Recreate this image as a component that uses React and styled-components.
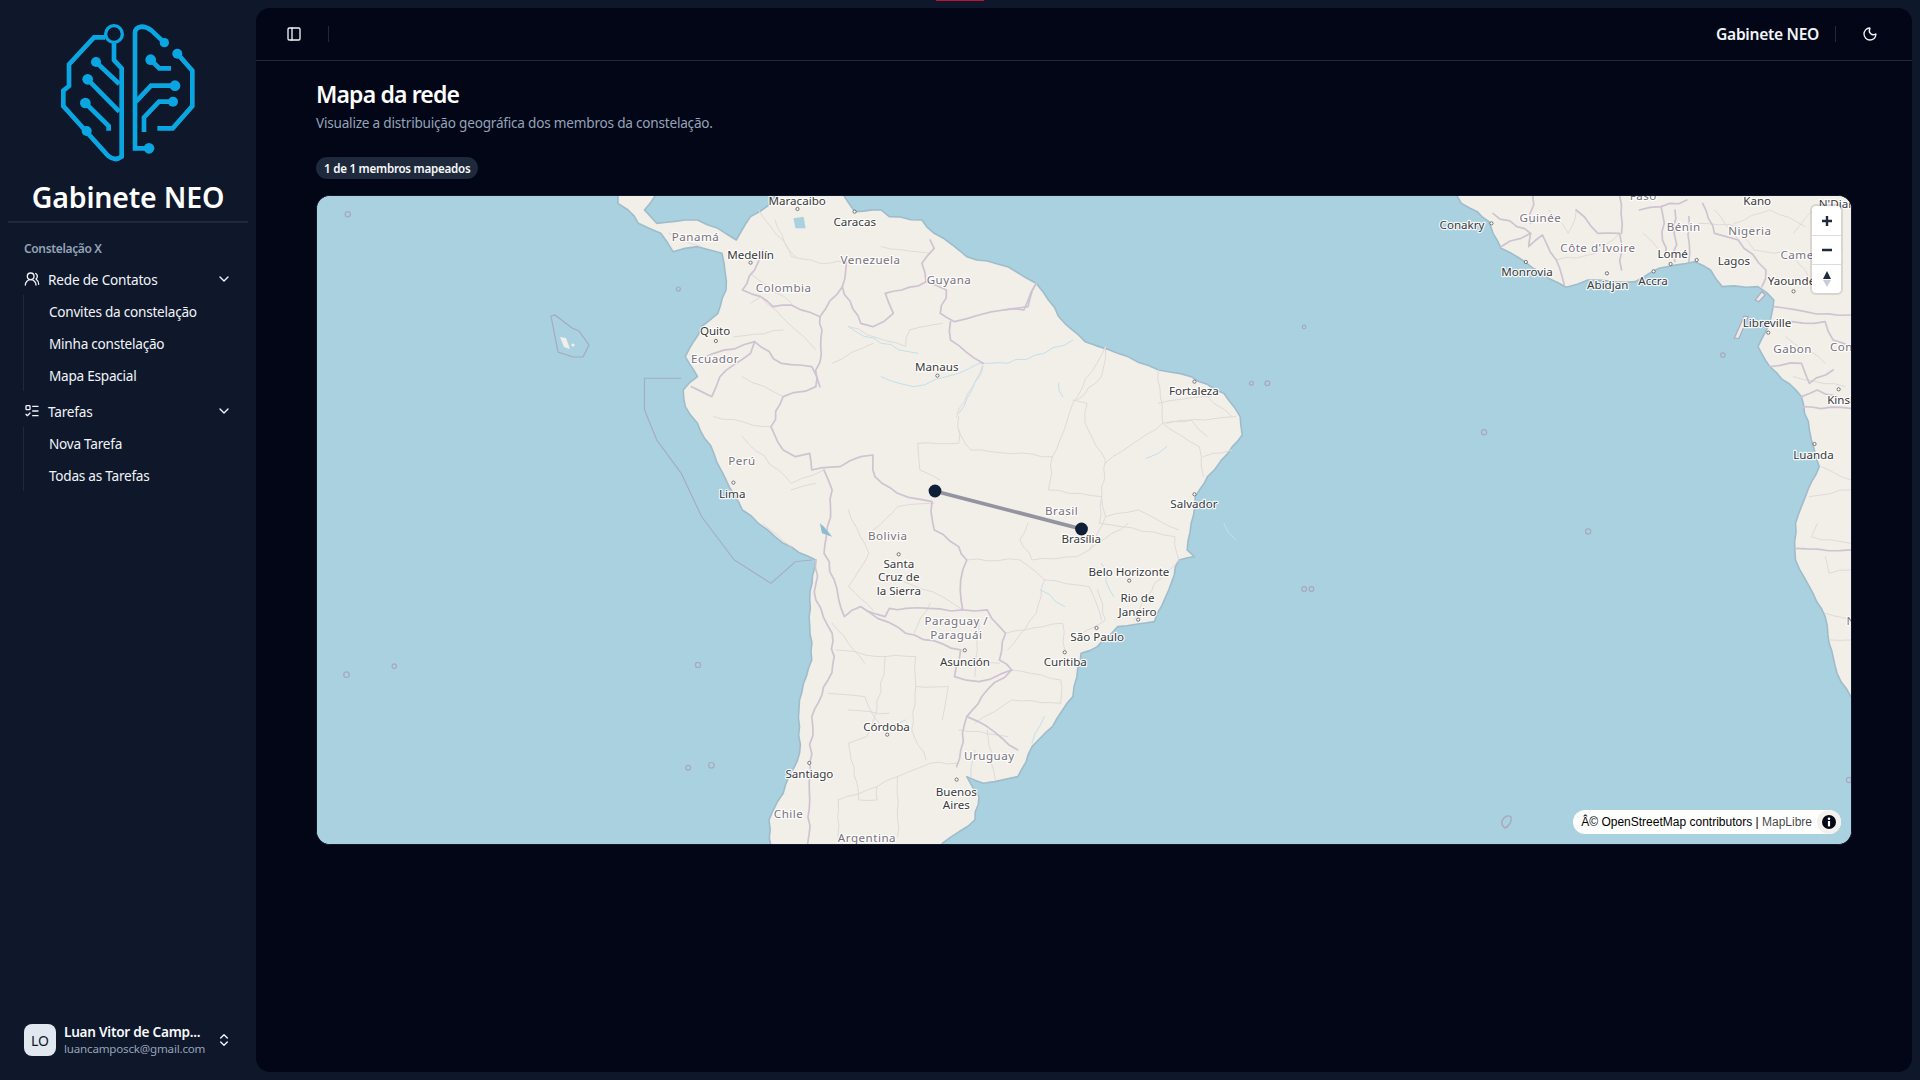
import React from "react";
import styled, { createGlobalStyle } from "styled-components";
import { ChevronDown, ChevronsUpDown, ListTodo, Moon, PanelLeft, UsersRound } from "lucide-react";

const SCALE = 1.2245;

// roughens a hand traced "M..L.." line so that it reads as a border or a coast
const wobble = (d, amp, seed = 7) => {
    let s = seed;
    const rand = () => {
        s = (s * 9301 + 49297) % 233280;
        return s / 233280 - 0.5;
    };
    const closed = d.endsWith("Z");
    const nums = d.match(/-?\d+(\.\d+)?/g).map(Number);
    let out = `M${nums[0]} ${nums[1]}`;
    for (let i = 2; i < nums.length; i += 2) {
        const [x0, y0, x1, y1] = [nums[i - 2], nums[i - 1], nums[i], nums[i + 1]];
        const len = Math.hypot(x1 - x0, y1 - y0);
        const n = Math.max(1, Math.round(len / 26));
        for (let k = 1; k <= n; k++) {
            const t = k / n;
            const off = k < n ? amp * rand() * 2 : 0;
            const px = x0 + (x1 - x0) * t - ((y1 - y0) / len) * off;
            const py = y0 + (y1 - y0) * t + ((x1 - x0) / len) * off;
            out += `L${px.toFixed(1)} ${py.toFixed(1)}`;
        }
    }
    return closed ? `${out}Z` : out;
};

// all labels in coordinates of the map as first sketched, multiplied by SCALE when drawn
const CITIES = [
    ["Maracaibo", 651, 164], ["Caracas", 698, 181], ["Medellín", 613, 208], ["Quito", 584, 270],
    ["Manaus", 765, 299], ["Fortaleza", 975, 319], ["Lima", 598, 403], ["Brasília", 883, 440],
    ["Salvador", 975, 411], ["Santa", 734, 460], ["Cruz de", 734, 471], ["la Sierra", 734, 482],
    ["Belo Horizonte", 922, 467], ["Rio de", 929, 488], ["Janeiro", 929, 499], ["São Paulo", 896, 520],
    ["Asunción", 788, 540], ["Curitiba", 870, 540], ["Córdoba", 724, 593], ["Santiago", 661, 632],
    ["Buenos", 781, 646], ["Aires", 781, 657], ["Conakry", 1194, 183], ["Lomé", 1366, 207],
    ["Lagos", 1416, 213], ["Monrovia", 1247, 222], ["Abidjan", 1313, 232], ["Accra", 1350, 229],
    ["Yaoundé", 1463, 229], ["Kano", 1435, 164], ["N'Djamena", 1510, 166], ["Libreville", 1443, 263],
    ["Kinshasa", 1512, 326], ["Luanda", 1481, 371],
];

const COUNTRIES = [
    ["Panamá", 568, 193], ["Venezuela", 711, 212], ["Colombia", 640, 235], ["Guyana", 775, 228],
    ["Ecuador", 584, 293], ["Perú", 606, 376], ["Bolivia", 725, 437], ["Brasil", 867, 417],
    ["Paraguay /", 781, 507], ["Paraguái", 781, 518], ["Uruguay", 808, 617], ["Chile", 644, 664],
    ["Argentina", 708, 684], ["Guinée", 1258, 178], ["Bénin", 1375, 185], ["Nigeria", 1429, 188],
    ["Côte d'Ivoire", 1305, 202], ["Faso", 1342, 160], ["Gabon", 1464, 285], ["Congo", 1510, 283],
    ["Cameroun", 1479, 208], ["Namibia", 1528, 507],
];

const ISLANDS = [
    [284, 175, 2.6], [554, 236, 2], [283, 551, 2.8], [322, 544, 2.2], [570, 543, 2.6], [562, 627, 2.4],
    [581, 625, 2.8], [1065, 267, 1.8], [1022, 313, 2], [1035, 313, 2.4], [1212, 353, 2.6], [1297, 434, 2.6],
    [1065, 481, 2.4], [1071, 481, 2.4], [1407, 290, 2.2], [1510, 637, 2.6],
];

const SA_DOTS = [
    [575, 65], [435, 57], [320, 218], [235, 453], [778, 557], [1408, 575], [278, 878], [1408, 913],
    [683, 1093], [1248, 1172], [1270, 1289], [1168, 1314], [845, 1381], [1090, 1387], [655, 1634],
    [464, 1719], [825, 1769],
];

const AF_DOTS = [[636, 100], [723, 216], [928, 250], [1046, 244], [1089, 222], [1155, 210], [1400, 304], [1336, 428], [1514, 598], [1453, 762]];

const SA_COAST = wobble("M-5 10L90 10L60 60L90 100L130 95L190 90L240 115L285 150L320 80L365 45L385 10L545 10L575 65L640 60L660 80L740 90L770 130L815 165L850 200L950 230L1020 280L1050 330L1090 400L1140 455L1220 490L1320 540L1400 560L1480 610L1520 680L1525 735L1490 790L1440 860L1410 920L1400 1000L1390 1080L1408 1100L1370 1110L1345 1200L1310 1295L1220 1310L1170 1370L1130 1390L1120 1460L1110 1520L1060 1610L1010 1670L975 1760L890 1780L850 1760L880 1820L870 1890L790 1960L780 2000L370 2000L365 1890L400 1810L440 1690L440 1530L470 1410L465 1230L480 1110L400 1060L300 960L260 870L230 790L190 700L160 650L155 600L190 560L160 500L200 410L240 370L260 300L255 220L250 190L190 170L130 185L100 130L45 100L20 60L-5 40Z", 3);

const SA_BORDERS = [
    "M555 215L545 290L590 400L620 410L670 370L650 310L690 300L750 275L740 220L770 175L760 150",
    "M750 275L800 300L785 370L820 395L880 375L940 360L1000 350L1020 280",
    "M545 290L490 380L495 420L480 590L400 620L370 710L400 780L430 800L465 790L470 840L540 830L590 800L620 795L625 860L680 910L765 935L770 1020L830 1070L850 1110L835 1170L840 1260L900 1260L945 1330L930 1410L960 1440L900 1500L850 1580L900 1610L975 1680",
    "M500 840L520 900L500 1090L525 1170L550 1280L590 1250L650 1280L660 1255L700 1255L840 1260",
    "M175 590L225 620L245 560L320 490L330 455L395 520L470 530L490 590",
    "M190 510L230 490L330 455",
    "M490 380L420 345L375 350L345 320L300 300L330 240L350 180",
    "M480 1110L480 1230L520 1330L525 1400L510 1470L470 1580L465 1720L465 1830L460 1960",
    "M590 1250L700 1330L835 1380L820 1460L880 1475L960 1440",
    "M850 1580L825 1730",
    "M1020 280L990 360L940 360",
    "M810 395L810 450L890 520",
].map((d, i) => wobble(d, 5, i + 3));

const SA_STATES = [
    "M830 680L830 760L730 760L735 840L785 870",
    "M830 720L860 780L1060 800L1050 900L1180 920L1190 980L1150 1080L1120 1100L1010 1110L980 1050L1000 1000",
    "M1060 800L1110 640L1190 470",
    "M1110 630L1145 640L1140 700L1190 810L1175 1000L1360 1040L1370 1110",
    "M1320 540L1330 700L1420 770L1430 860",
    "M1190 820L1330 700L1510 680",
    "M890 520L825 680",
    "M560 410L700 470L710 420L790 400",
    "M850 1110L980 1110L1040 1170L1020 1270L950 1380",
    "M1040 1170L1150 1190L1180 1290",
    "M945 1330L1085 1300L1090 1380",
    "M960 1440L1080 1470L1080 1540",
    "M530 1380L650 1400L725 1400L725 1490L805 1490L790 1590",
    "M650 1400L630 1560L605 1640L560 1660L585 1830L630 1830L630 1790L680 1760L680 1940",
    "M535 1830L630 1790",
    "M535 1830L535 1960",
    "M680 1760L760 1720L825 1720",
    "M510 1510L600 1520L635 1600",
    "M725 1490L715 1620L750 1710",
    "M830 1620L950 1640",
    "M870 1680L860 1760",
    "M900 1620L920 1770",
    "M320 250L420 340",
    "M380 90L420 200L490 220L555 215",
    "M320 340L345 320L480 480",
    "M230 680L350 710L370 710",
    "M300 740L420 880L500 840",
    "M620 1020L680 950L770 940",
    "M560 960L610 1090L560 1190L620 1260",
    "M640 1150L790 1220L840 1260",
    "M1190 470L1180 560L1120 630",
    "M1320 640L1450 620",
    "M1340 700L1400 690L1440 740",
    "M1430 800L1500 780",
    "M1190 980L1270 960L1370 1020",
    "M1150 1080L1245 1000",
    "M1370 1110L1310 1180L1260 1290",
    "M1170 1200L1190 1290L1120 1340",
    "M760 1240L720 1330",
    "M880 1300L870 1460",
    "M830 1420L930 1420",
    "M560 1560L660 1570",
    "M1080 1540L960 1530L870 1600",
    "M520 1300L600 1420",
    "M620 460L520 520",
    "M400 620L300 560",
    "M280 440L400 420",
    "M350 1000L420 1070",
    "M480 880L420 900",
    "M1500 680L1440 620",
    "M120 130L200 170",
    "M340 60L430 200",
    "M640 170L760 190",
].map((d, i) => wobble(d, 4, i + 40));

const SA_RIVERS = [
    "M560 410L640 460L730 490",
    "M640 560L720 590L800 560L880 520L950 520L1040 490L1110 450",
    "M830 670L890 530",
    "M1075 580L1085 620",
    "M1290 805L1340 770",
    "M1480 1000L1510 1050",
    "M1180 1120L1210 1220",
    "M1030 1200L1090 1250",
    "M700 1590L650 1610",
    "M1010 1660L1040 1580",
].map((d, i) => wobble(d, 5, i + 90));

const AF_COAST = wobble("M545 10L560 40L600 65L630 95L640 130L660 175L720 215L780 265L825 292L880 270L1000 275L1060 235L1150 215L1190 240L1220 290L1310 290L1350 330L1340 400L1310 470L1340 530L1420 620L1440 720L1465 830L1430 920L1405 1000L1405 1110L1440 1190L1480 1280L1490 1360L1510 1450L1545 1520L1620 1520L1620 10Z", 3, 11);

const AF_BORDERS = [
    "M640 70L700 110L735 130L730 170L765 135L800 210L820 285",
    "M740 16L735 100",
    "M660 170L735 130",
    "M850 60L905 130L960 130L965 240",
    "M960 16L965 130",
    "M1010 60L1065 50L1130 30",
    "M1065 50L1075 200",
    "M1100 60L1100 215",
    "M1135 80L1135 215",
    "M1170 40L1200 130L1260 150L1330 240L1320 290",
    "M1350 350L1430 365L1545 375",
    "M1340 400L1480 395L1500 450L1545 470",
    "M1340 530L1420 520L1440 580L1500 540",
    "M1420 650L1545 655",
    "M1420 620L1460 600L1545 640",
    "M1405 1075L1545 1080",
].map((d, i) => wobble(d, 5, i + 120));

const AF_STATES = [
    "M780 60L830 130L850 60",
    "M800 210L900 190L960 130",
    "M1020 130L1060 180",
    "M1200 60L1260 150",
    "M1160 100L1260 110L1300 180",
    "M1400 130L1450 60",
    "M1480 1100L1490 1150L1545 1140",
    "M1460 1000L1445 1040L1545 1060",
    "M1470 830L1545 870",
    "M1440 920L1545 900",
    "M1480 1270L1545 1290",
    "M1490 1350L1545 1350",
    "M1250 100L1340 60L1430 110",
    "M1300 180L1400 190L1440 270",
    "M1380 440L1480 520",
    "M1400 560L1530 590",
].map((d, i) => wobble(d, 5, i + 150));

const NAV_GROUPS = [
    { label: "Rede de Contatos", Icon: UsersRound, items: ["Convites da constelação", "Minha constelação", "Mapa Espacial"] },
    { label: "Tarefas", Icon: ListTodo, items: ["Nova Tarefa", "Todas as Tarefas"] },
];

const GlobalStyle = createGlobalStyle`
    * { box-sizing: border-box; }
    html, body { margin: 0; height: 100%; background: #0f172a; overflow: hidden; }
    body { font-family: "Noto Sans", "Open Sans", sans-serif; color: #f8fafc; }
`;

const Shell = styled.div`
    position: relative;
    display: flex;
    height: 100vh;
    background: #0f172a;
`;

const TopMark = styled.div`
    position: absolute;
    top: 0;
    left: 936px;
    width: 48px;
    height: 1px;
    background: #be123c;
`;

const Sidebar = styled.aside`
    width: 256px;
    flex-shrink: 0;
    display: flex;
    flex-direction: column;
    padding: 0 8px;
`;

const Brand = styled.div`
    display: flex;
    flex-direction: column;
    align-items: center;
    padding-top: 24px;
    height: 223px;
    border-bottom: 2px solid #1e293b;
`;

const BrandName = styled.div`
    margin-top: 15px;
    font-size: 28.5px;
    line-height: 40px;
    font-weight: 600;
    letter-spacing: -0.2px;
    color: #fff;
`;

const GroupLabel = styled.div`
    margin: 17px 0 0 16px;
    font-size: 12px;
    line-height: 18px;
    font-weight: 600;
    letter-spacing: -0.35px;
    color: #94a3b8;
`;

const Nav = styled.nav`
    flex: 1;
    display: flex;
    flex-direction: column;
    padding-top: 5px;
    gap: 4px;
`;

const NavRow = styled.div`
    height: 32px;
    display: flex;
    align-items: center;
    gap: 8px;
    padding: 0 16px 0 16px;
    font-size: 13.6px;
    letter-spacing: -0.2px;
    color: #f1f5f9;

    svg.end { margin-left: auto; }
`;

const SubList = styled.ul`
    list-style: none;
    margin: 0 0 0 15px;
    padding: 0 0 0 25px;
    border-left: 1px solid #1e293b;
`;

const SubItem = styled.li`
    height: 32px;
    display: flex;
    align-items: center;
    font-size: 13.6px;
    letter-spacing: -0.25px;
    color: #f1f5f9;
`;

const UserRow = styled.div`
    display: flex;
    align-items: center;
    gap: 8px;
    padding: 0 8px 23px 16px;
`;

const Avatar = styled.div`
    width: 32px;
    height: 32px;
    border-radius: 8px;
    flex-shrink: 0;
    display: flex;
    align-items: center;
    justify-content: center;
    background: #e2e8f0;
    color: #0f172a;
    font-size: 14px;
`;

const UserInfo = styled.div`
    width: 144px;
    display: flex;
    flex-direction: column;
`;

const UserName = styled.div`
    font-size: 13.6px;
    line-height: 18px;
    font-weight: 600;
    letter-spacing: -0.25px;
    white-space: nowrap;
`;

const UserMail = styled.div`
    font-size: 11.6px;
    line-height: 16px;
    letter-spacing: -0.2px;
    color: #94a3b8;
    white-space: nowrap;
`;

const Inset = styled.main`
    flex: 1;
    margin: 8px 8px 8px 0;
    border-radius: 14px;
    background: #020617;
    display: flex;
    flex-direction: column;
    min-width: 0;
`;

const TopBar = styled.header`
    height: 53px;
    flex-shrink: 0;
    display: flex;
    align-items: center;
    padding: 0 34px 0 30px;
    border-bottom: 1px solid #1e293b;
    color: #f1f5f9;
`;

const VRule = styled.span`
    width: 1px;
    height: 16px;
    background: #1e293b;
    margin: ${(p) => p.$margin};
`;

const TopTitle = styled.div`
    margin-left: auto;
    font-size: 15.6px;
    font-weight: 600;
    letter-spacing: -0.3px;
`;

const Content = styled.div`
    padding: 17px 60px 0 60px;
`;

const Title = styled.h1`
    margin: 0;
    font-size: 23px;
    line-height: 32px;
    font-weight: 600;
    letter-spacing: -0.85px;
    color: #fff;
`;

const Subtitle = styled.p`
    margin: 3px 0 0;
    font-size: 13.6px;
    line-height: 20px;
    letter-spacing: -0.22px;
    color: #94a3b8;
`;

const Badge = styled.span`
    display: inline-flex;
    align-items: center;
    height: 22px;
    margin-top: 24px;
    padding: 0 8px;
    border-radius: 11px;
    background: #1e293b;
    font-size: 11.6px;
    font-weight: 600;
    letter-spacing: -0.25px;
    color: #f8fafc;
`;

const MapFrame = styled.div`
    position: relative;
    height: 650px;
    margin-top: 16px;
    border: 1px solid #0f172a;
    border-radius: 14px;
    overflow: hidden;
    background: #aad1df;
`;

const MapDrawing = styled.svg`
    display: block;
    width: 100%;
    height: 100%;
`;

const Land = styled.path`
    fill: #f2efe9;
    stroke: #9fbccb;
    stroke-width: 1.6;
    stroke-linejoin: round;
    vector-effect: non-scaling-stroke;
`;

const MapLine = styled.path`
    fill: none;
    stroke: ${(p) => p.$color};
    stroke-width: ${(p) => p.$width};
    stroke-linejoin: round;
    stroke-linecap: round;
    vector-effect: non-scaling-stroke;
`;

const MapLabel = styled.text`
    font-family: "Noto Sans", sans-serif;
    font-size: 11.6px;
    text-anchor: middle;
    dominant-baseline: central;
    fill: ${(p) => (p.$muted ? "#77727c" : "#3a3a3a")};
    letter-spacing: ${(p) => (p.$muted ? "0.5px" : "0")};
    paint-order: stroke;
    stroke: rgba(255, 255, 255, 0.85);
    stroke-width: 2.4px;
    stroke-linejoin: round;
`;

const ZoomControls = styled.div`
    position: absolute;
    top: 10px;
    right: 10px;
    width: 29px;
    border-radius: 4px;
    background: #fff;
    box-shadow: 0 0 0 2px rgba(0, 0, 0, 0.1);
    display: flex;
    flex-direction: column;
`;

const ZoomButton = styled.div`
    height: 29px;
    display: flex;
    align-items: center;
    justify-content: center;
    & + & { border-top: 1px solid #ddd; }
`;

const Attribution = styled.div`
    position: absolute;
    right: 10px;
    bottom: 10px;
    height: 24px;
    display: flex;
    align-items: center;
    gap: 5px;
    padding-left: 8px;
    border-radius: 12px;
    background: #fff;
    font-family: "Liberation Sans", Arial, sans-serif;
    font-size: 12px;
    color: #000;
    white-space: nowrap;
`;

const AttrLink = styled.span`
    color: rgba(0, 0, 0, 0.75);
`;

const InfoDisc = styled.div`
    width: 24px;
    height: 24px;
    border-radius: 50%;
    background: #f4f1ec;
    display: flex;
    align-items: center;
    justify-content: center;
`;

const LOGO = "#0aa6e2";

const Logo = () => (
    <svg width="134" height="138" viewBox="184 72 400 414" fill="none" stroke={LOGO} strokeWidth="14">
        <circle cx="342" cy="102" r="25" strokeWidth="10" />
        <path d="M315 112H282L207 193V258L190 272V318L325 468Q345 485 365 470V205L342 180V130" />
        <path d="M288 186L358 252M263 238L358 335M256 309L326 378V392" />
        <path d="M447 445H405V100Q405 82 425 80Q440 80 455 92L493 128" />
        <path d="M532 161L577 212V318L518 385H472" />
        <path d="M452 179L478 205H513M525 257H453L408 305M519 305H477L432 352V396" />
        <g fill={LOGO} stroke="none">
            <circle cx="493" cy="128" r="14" /><circle cx="532" cy="161" r="15" />
            <circle cx="452" cy="179" r="16" /><circle cx="525" cy="257" r="16" />
            <circle cx="519" cy="305" r="15" /><circle cx="447" cy="445" r="16" />
            <circle cx="288" cy="186" r="15" /><circle cx="263" cy="238" r="16" />
            <circle cx="256" cy="309" r="16" /><circle cx="260" cy="393" r="15" />
        </g>
    </svg>
);

const CityDot = ({ x, y, sx }) => (
    <g transform={`translate(${x} ${y}) scale(${sx} 3)`}>
        <circle r="1.6" fill="#fff" stroke="#555" strokeWidth="0.8" />
    </g>
);

const RealMap = () => (
    <MapDrawing viewBox="317 196 1534 648" preserveAspectRatio="none">
        <defs>
            <filter id="soft" x="-5%" y="-20%" width="110%" height="140%">
                <feGaussianBlur stdDeviation="0.7" />
            </filter>
        </defs>
        <rect x="317" y="196" width="1534" height="648" fill="#aad1df" />
        <g transform="translate(620 190) scale(0.408 0.3333)">
            <path d="M60 565H150M60 565V660L90 750L150 850L200 980L280 1110L370 1180L430 1115L470 1110" fill="none" stroke="#a3acc2" strokeWidth="2.8" />
            <Land d={SA_COAST} />
            {SA_STATES.map((d) => <MapLine key={d} d={d} $color="#e0d9da" $width={1} />)}
            {SA_RIVERS.map((d) => <MapLine key={d} d={d} $color="#c2e0ea" $width={1} />)}
            {SA_BORDERS.map((d) => <MapLine key={d} d={d} $color="#cfc3d1" $width={1.7} />)}
            <path d="M425 85L450 80L455 115L430 115Z" fill="#aad1df" />
            <path d="M490 1000L500 1010L520 1040L495 1030Z" fill="#8dbbd0" />
            {SA_DOTS.map(([x, y]) => <CityDot key={`${x}-${y}`} x={x} y={y} sx={2.45} />)}
            <g filter="url(#soft)">
                <path d="M771 903L1131 1017" stroke="#7c7e8e" strokeWidth="11" opacity="0.8" />
            </g>
        </g>
        <g transform="translate(1240 190) scale(0.3954 0.3333)">
            <Land d={AF_COAST} />
            {AF_STATES.map((d) => <MapLine key={d} d={d} $color="#e0d9da" $width={1} />)}
            {AF_BORDERS.map((d) => <MapLine key={d} d={d} $color="#cfc3d1" $width={1.7} />)}
            <path d="M1250 445L1275 378L1285 380L1262 445Z" fill="#eceae6" stroke="#a8a9bc" strokeWidth="3" />
            <path d="M1303 330L1320 305L1328 315L1312 335Z" fill="#eceae6" stroke="#a8a9bc" strokeWidth="3" />
            {AF_DOTS.map(([x, y]) => <CityDot key={`${x}-${y}`} x={x} y={y} sx={2.53} />)}
        </g>
        <path d="M551 316L555 315L572 328L579 331L589 345L583 357L573 357L558 352Z" fill="none" stroke="#a8a9bc" strokeWidth="1.2" />
        <path d="M560 337L564 347L570 349L566 338Z" fill="#f2efe9" />
        <circle cx="573" cy="345" r="1.6" fill="#f2efe9" />
        <path d="M1504 818C1500 822 1502 826 1505 828C1510 826 1512 820 1511 817C1509 815 1506 816 1504 818Z" fill="none" stroke="#a8a9bc" strokeWidth="1.4" />
        {ISLANDS.map(([x, y, r]) => (
            <circle key={`${x}-${y}`} cx={x * SCALE} cy={y * SCALE} r={r} fill="none" stroke="#a8a9bc" strokeWidth="1.2" />
        ))}
        {COUNTRIES.map(([t, x, y]) => <MapLabel key={t} x={x * SCALE} y={y * SCALE} $muted>{t}</MapLabel>)}
        {CITIES.map(([t, x, y]) => <MapLabel key={t} x={x * SCALE} y={y * SCALE}>{t}</MapLabel>)}
        <circle cx="935" cy="491" r="6.4" fill="#0f1f38" />
        <circle cx="1081.5" cy="529" r="6.4" fill="#0f1f38" />
    </MapDrawing>
);

const App = () => (
    <Shell>
        <GlobalStyle />
        <TopMark />
        <Sidebar>
            <Brand>
                <Logo />
                <BrandName>Gabinete NEO</BrandName>
            </Brand>
            <GroupLabel>Constelação X</GroupLabel>
            <Nav>
                {NAV_GROUPS.map(({ label, Icon, items }) => (
                    <div key={label}>
                        <NavRow>
                            <Icon size={16} />
                            {label}
                            <ChevronDown size={16} className="end" />
                        </NavRow>
                        <SubList>
                            {items.map((item) => <SubItem key={item}>{item}</SubItem>)}
                        </SubList>
                    </div>
                ))}
            </Nav>
            <UserRow>
                <Avatar>LO</Avatar>
                <UserInfo>
                    <UserName>Luan Vitor de Camp...</UserName>
                    <UserMail>luancamposck@gmail.com</UserMail>
                </UserInfo>
                <ChevronsUpDown size={16} />
            </UserRow>
        </Sidebar>
        <Inset>
            <TopBar>
                <PanelLeft size={16} />
                <VRule $margin="0 0 0 26px" />
                <TopTitle>Gabinete NEO</TopTitle>
                <VRule $margin="0 26px 0 16px" />
                <Moon size={16} />
            </TopBar>
            <Content>
                <Title>Mapa da rede</Title>
                <Subtitle>Visualize a distribuição geográfica dos membros da constelação.</Subtitle>
                <Badge>1 de 1 membros mapeados</Badge>
                <MapFrame>
                    <RealMap />
                    <ZoomControls>
                        <ZoomButton>
                            <svg width="14" height="14" viewBox="0 0 14 14"><path d="M7 2v10M2 7h10" stroke="#1f2a3d" strokeWidth="2.4" /></svg>
                        </ZoomButton>
                        <ZoomButton>
                            <svg width="14" height="14" viewBox="0 0 14 14"><path d="M2 7h10" stroke="#1f2a3d" strokeWidth="2.4" /></svg>
                        </ZoomButton>
                        <ZoomButton>
                            <svg width="10" height="18" viewBox="0 0 10 18"><path d="M5 1L9 9H1Z" fill="#1f2a3d" /><path d="M5 17L9 10H1Z" fill="#c9ccd2" /></svg>
                        </ZoomButton>
                    </ZoomControls>
                    <Attribution>
                        <span>Â© OpenStreetMap contributors | <AttrLink>MapLibre</AttrLink></span>
                        <InfoDisc>
                            <svg width="14" height="14" viewBox="0 0 14 14">
                                <circle cx="7" cy="7" r="7" fill="#020617" />
                                <rect x="5.9" y="6" width="2.2" height="5.4" fill="#fff" />
                                <circle cx="7" cy="3.8" r="1.3" fill="#fff" />
                            </svg>
                        </InfoDisc>
                    </Attribution>
                </MapFrame>
            </Content>
        </Inset>
    </Shell>
);

export default App;
